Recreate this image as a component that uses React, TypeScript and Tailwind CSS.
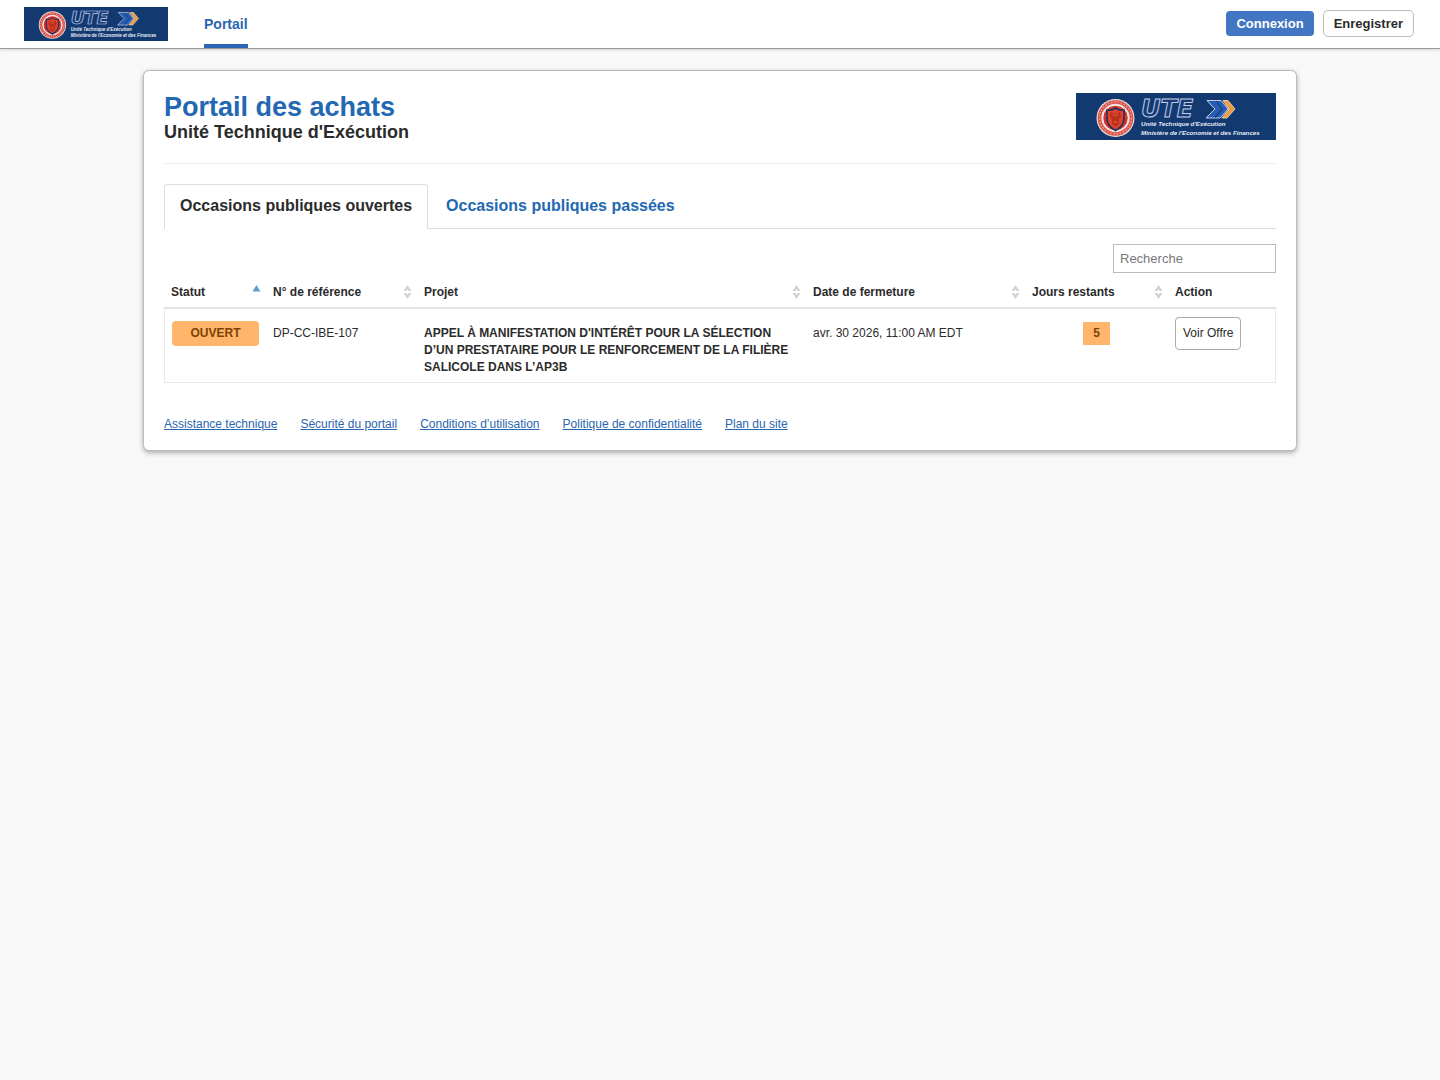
import { useState } from 'react';

interface Offer {
  status: string;
  reference: string;
  project: string;
  closing: string;
  daysLeft: number;
}

const OFFERS: Offer[] = [
  {
    status: 'OUVERT',
    reference: 'DP-CC-IBE-107',
    project:
      'APPEL À MANIFESTATION D\'INTÉRÊT POUR LA SÉLECTION D’UN PRESTATAIRE POUR LE RENFORCEMENT DE LA FILIÈRE SALICOLE DANS L’AP3B',
    closing: 'avr. 30 2026, 11:00 AM EDT',
    daysLeft: 5,
  },
];

const FOOTER_LINKS = [
  'Assistance technique',
  'Sécurité du portail',
  'Conditions d’utilisation',
  'Politique de confidentialité',
  'Plan du site',
];

function Logo({ className }: { className: string }) {
  return (
    <svg viewBox="0 0 200 47" preserveAspectRatio="none" className={className} role="img" aria-label="UTE">
      <rect width="200" height="47" fill="#133a70" />
      {/* Seal */}
      <circle cx="39.5" cy="25" r="19" fill="#f0dcd8" />
      <circle cx="39.5" cy="25" r="16" fill="none" stroke="#d9534b" strokeWidth="3.6" />
      <circle cx="39.5" cy="25" r="16" fill="none" stroke="#eaa39a" strokeWidth="1.4" strokeDasharray="1.5 1.7" />
      <circle cx="39.5" cy="25" r="12.8" fill="#d2342c" stroke="#fff" strokeWidth="1" />
      <path d="M31 17q4.500 1 8.500-2 4 3 8.500 2v8q0 8-8.500 12.500Q31 33 31 25z" fill="#e2412b" stroke="#26325e" strokeWidth="1.600" />
      <path d="M35 19l4.500 2 4.500-2 1 5-2 2v5l-3.500 3-3.500-3v-5l-2-2z" fill="#b93020" />
      <path d="M36.500 21l3 2 3-2M37.500 29h4" fill="none" stroke="#e8672f" strokeWidth="1" />
      {/* Outlined initials */}
      <text x="65" y="24" fontSize="24" className="font-['DejaVu_Sans',sans-serif] font-bold italic" fill="#163d7b" stroke="#c4cbe6" strokeWidth="1">
        UTE
      </text>
      {/* Double chevron */}
      <path d="M147 7.500h5l7 8.500-8 9h-5l7-9z" fill="#ef9a3d" stroke="#f7e3cf" strokeWidth="0.800" />
      <path d="M131 7.500h14l7 8.500-8 9h-14l6-6 3-3-3-3z" fill="#255cb5" stroke="#c4cbe6" strokeWidth="1" />
      <path d="M140 8l6 8-7 8.500" fill="none" stroke="#163d7b" strokeWidth="1.200" />
      <g className="font-['Liberation_Sans',sans-serif] font-bold italic" fontSize="6.200" fill="#e6eaf2">
        <text x="65" y="33">Unité Technique d'Exécution</text>
        <text x="65" y="42">Ministère de l'Economie et des Finances</text>
      </g>
    </svg>
  );
}

function SortIcon() {
  return (
    <svg width="9" height="14" viewBox="0 0 9 14" className="shrink-0">
      <path d="M4.500 0L8.500 6h-8zM4.500 14L.5 8h8z" fill="#d2d2d2" />
      <path d="M4.500 4L5.500 6h-2zM4.500 10L3.500 8h2z" fill="#fff" />
    </svg>
  );
}

function SortedIcon() {
  return (
    <svg width="9" height="14" viewBox="0 0 9 14" className="shrink-0">
      <path d="M4.500 0L8.500 6.500h-8z" fill="#5ba3cf" />
    </svg>
  );
}

function HeadCell({ children, sort, className }: { children: string; sort?: 'none' | 'asc'; className?: string }) {
  return (
    <th className={['pl-[7px] pr-[5px] pt-[11px] pb-[7px] text-left font-bold', className].join(' ')}>
      <div className="flex items-center justify-between">
        {children}
        {sort === 'asc' && <SortedIcon />}
        {sort === 'none' && <SortIcon />}
      </div>
    </th>
  );
}

export default function App() {
  const [tab, setTab] = useState<'open' | 'past'>('open');
  const [query, setQuery] = useState('');

  const rows = tab === 'open' ? OFFERS.filter((o) => o.project.toLowerCase().includes(query.toLowerCase())) : [];

  const tabClass = (active: boolean) =>
    active
      ? 'h-[45px] -mb-px px-[15px] pb-0.5 rounded-t border border-b-0 border-[#ddd] bg-white text-[#2b2b2b]'
      : 'h-11 px-[18px] pb-px text-[#2268b2]';

  return (
    <div className="min-h-screen bg-[#f8f8f8] font-['Liberation_Sans',Arial,sans-serif] text-xs text-[#2b2b2b]">
      <header className="flex h-[49px] items-center justify-between border-b border-[#999] bg-white pr-[26px] pl-6 shadow-[0_1px_3px_rgba(0,0,0,0.15)]">
        <div className="flex h-full items-center gap-9">
          <Logo className="h-[34px] w-36" />
          <nav className="h-full">
            <a href="#" className="flex h-full items-center border-b-4 border-[#2a66b4] pt-1 text-sm font-bold text-[#2a66b0]">
              Portail
            </a>
          </nav>
        </div>
        <div className="flex items-center gap-[9px] pb-px text-[13px] leading-4 font-bold">
          <button className="h-[25px] rounded bg-[#4276c3] px-[10px] text-white">Connexion</button>
          <button className="h-[27px] rounded-[5px] border border-[#bbb] bg-white px-[10px]">Enregistrer</button>
        </div>
      </header>

      <main className="mx-auto mt-[22px] w-4/5 rounded-[5px] bg-white px-5 pt-[21px] pb-[17px] shadow-[0_0_0_1px_#bbb,0_2px_5px_1px_rgba(0,0,0,0.3)]">
        <div className="flex items-start justify-between border-b border-[#eee] pb-[21px]">
          <div>
            <h1 className="text-[27px] leading-[30px] font-bold text-[#2268b2]">Portail des achats</h1>
            <h2 className="text-lg leading-5 font-bold">Unité Technique d'Exécution</h2>
          </div>
          <Logo className="mt-px h-[47px] w-[200px]" />
        </div>

        <div role="tablist" className="mt-5 flex items-start border-b border-[#ddd] text-base font-bold">
          <button role="tab" aria-selected={tab === 'open'} onClick={() => setTab('open')} className={tabClass(tab === 'open')}>
            Occasions publiques ouvertes
          </button>
          <button role="tab" aria-selected={tab === 'past'} onClick={() => setTab('past')} className={tabClass(tab === 'past')}>
            Occasions publiques passées
          </button>
        </div>

        <div className="mt-[15px] flex justify-end">
          <input
            type="search"
            aria-label="Recherche"
            placeholder="Recherche"
            value={query}
            onChange={(e) => setQuery(e.target.value)}
            className="h-[29px] w-[163px] border border-[#bbb] bg-white px-1.5 text-[13px] placeholder:text-[#777]"
          />
        </div>

        <table className="w-full table-fixed border-separate border-spacing-0">
          <thead>
            <tr className="[&>th]:border-b-2 [&>th]:border-[#e4e4e4]">
              <HeadCell sort="asc" className="w-[102px]">Statut</HeadCell>
              <HeadCell sort="none" className="w-[151px]">N° de référence</HeadCell>
              <HeadCell sort="none">Projet</HeadCell>
              <HeadCell sort="none" className="w-[219px]">Date de fermeture</HeadCell>
              <HeadCell sort="none" className="w-[143px]">Jours restants</HeadCell>
              <HeadCell className="w-[108px]">Action</HeadCell>
            </tr>
          </thead>
          <tbody>
            {rows.map((o) => (
              <tr key={o.reference} className="align-top leading-[17px] [&>td]:border-b [&>td]:border-[#e8e8e8]">
                <td className="border-l px-[7px] pt-3">
                  <span className="block rounded bg-[#ffb56b] py-1 text-center font-bold text-[#7a4300]">{o.status}</span>
                </td>
                <td className="px-[7px] pt-4">{o.reference}</td>
                <td className="px-[7px] pt-4 pb-[6px] font-bold">{o.project}</td>
                <td className="px-[7px] pt-4">{o.closing}</td>
                <td className="px-[7px] pt-[13px] text-center">
                  <span className="inline-block bg-[#ffb56b] px-[10px] py-[3px] font-bold text-[#7a4300]">{o.daysLeft}</span>
                </td>
                <td className="border-r px-[7px] pt-2">
                  <button className="h-[33px] rounded border border-[#aaa] bg-white px-[7px] whitespace-nowrap">Voir Offre</button>
                </td>
              </tr>
            ))}
          </tbody>
        </table>

        <footer className="mt-[33px] flex flex-wrap gap-x-[23px] leading-[17px]">
          {FOOTER_LINKS.map((label) => (
            <a key={label} href="#" className="text-[#2a66b0] underline">
              {label}
            </a>
          ))}
        </footer>
      </main>
    </div>
  );
}
